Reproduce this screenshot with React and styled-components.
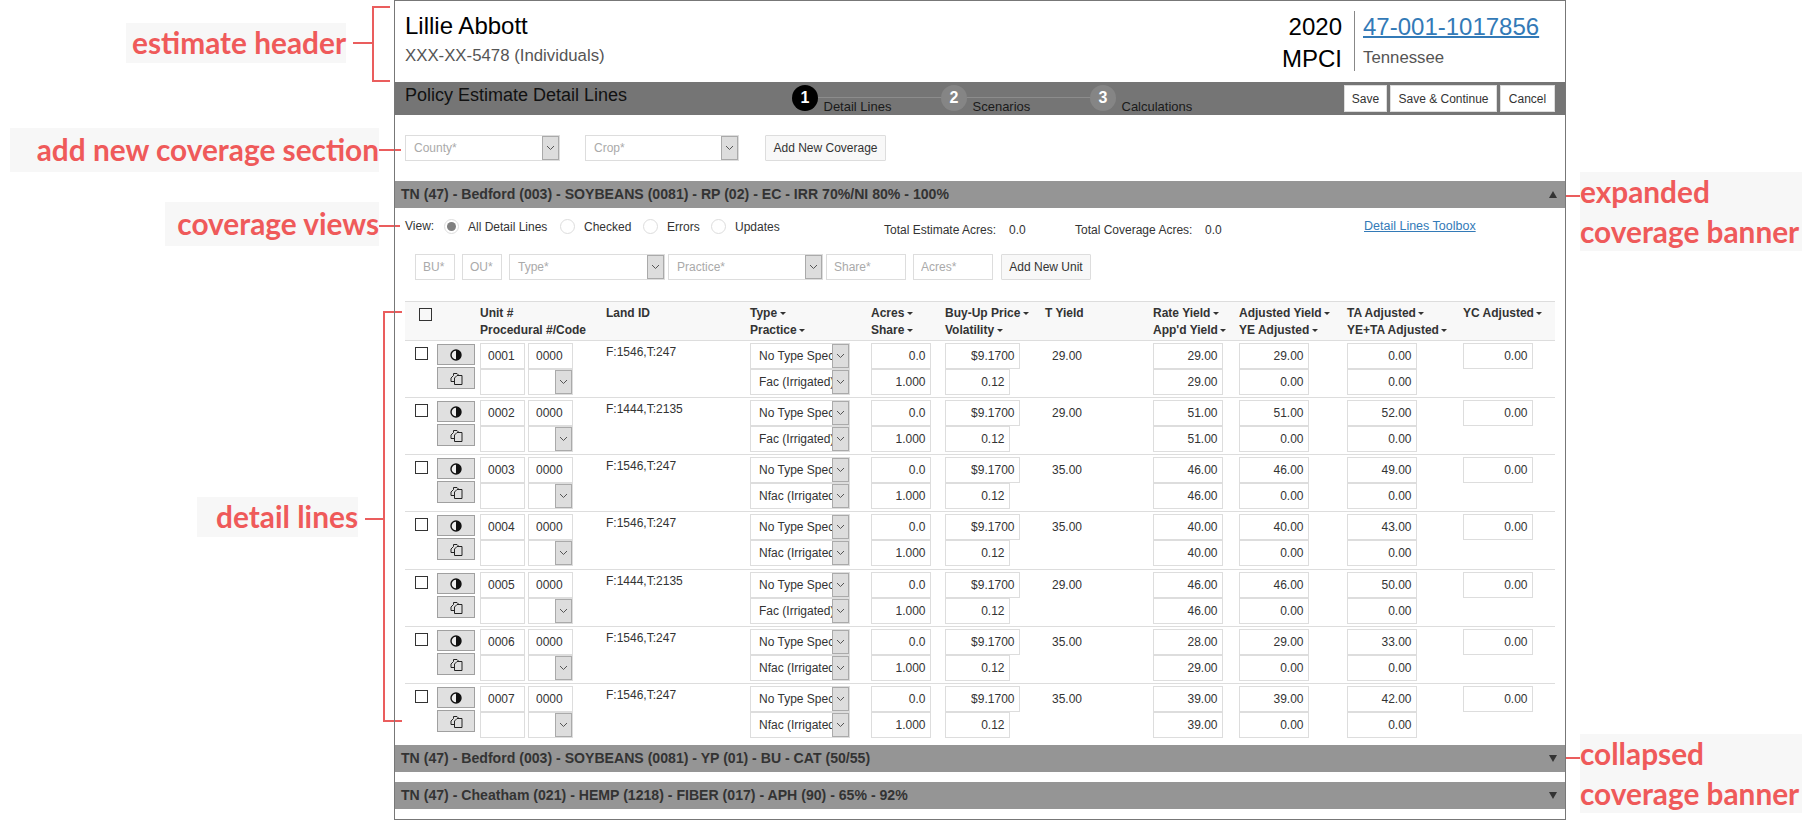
import React from 'react'
import styled, { createGlobalStyle } from 'styled-components'

const GlobalStyle = createGlobalStyle`
    html, body {
        margin: 0;
        padding: 0;
        background: #fff;
    }
    body {
        font-family: "Liberation Sans", Arial, sans-serif;
        font-size: 12px;
        color: #333;
    }
`

const Page = styled.div`
    position: relative;
    width: 1812px;
    height: 820px;
    overflow: hidden;
`

/* annotation layer around the screen */
const Note = styled.div`
    position: absolute;
    left: ${(p) => p.$x}px;
    top: ${(p) => p.$y}px;
    width: ${(p) => p.$w}px;
    height: ${(p) => p.$h}px;
    background: #f7f7f7;
    color: #ef5a5a;
    font-family: Lato, "Open Sans", sans-serif;
    font-weight: 700;
    font-size: 29.8px;
    line-height: 40px;
    text-align: ${(p) => p.$align || 'right'};
    white-space: nowrap;
    display: flex;
    flex-direction: column;
    justify-content: center;
`
const Bracket = styled.div`
    position: absolute;
    left: ${(p) => p.$x}px;
    top: ${(p) => p.$y}px;
    width: ${(p) => p.$w}px;
    height: ${(p) => p.$h}px;
    box-sizing: border-box;
    border: 2px solid #ea5d5d;
    border-right: none;
`
const Tick = styled.div`
    position: absolute;
    left: ${(p) => p.$x}px;
    top: ${(p) => p.$y}px;
    width: ${(p) => p.$w}px;
    height: 2px;
    background: #ea5d5d;
`

const Frame = styled.div`
    position: absolute;
    left: 394px;
    top: 0;
    width: 1172px;
    height: 820px;
    box-sizing: border-box;
    border: 1px solid #777;
`

const EstimateHeader = styled.header`
    height: 81px;
    display: flex;
    justify-content: space-between;
    padding-left: 10px;
`
const NameBlock = styled.div`
    padding-top: 11px;
`
const Name = styled.div`
    font-size: 24px;
    line-height: 28px;
    color: #000;
`
const Sub = styled.div`
    margin-top: 6px;
    font-size: 16.8px;
    line-height: 20px;
    color: #555;
`
const PolicyBlock = styled.div`
    display: flex;
    margin-top: 10px;
    height: 60px;
`
const YearCol = styled.div`
    padding-right: 12px;
    border-right: 1px solid #888;
    text-align: right;
    font-size: 24px;
    line-height: 31.5px;
    color: #000;
`
const PolicyCol = styled.div`
    width: 202px;
    padding-left: 8px;
`
const PolicyLink = styled.a`
    display: block;
    width: max-content;
    font-size: 24px;
    line-height: 31px;
    color: #337ab7;
    text-decoration: underline;
    text-decoration-thickness: 2px;
`
const StateName = styled.div`
    font-size: 16.8px;
    line-height: 32px;
    color: #555;
`

const StepBar = styled.div`
    position: relative;
    height: 33px;
    background: #757575;
    padding-left: 10px;
    display: flex;
    align-items: flex-start;
`
const BarTitle = styled.div`
    font-size: 18px;
    line-height: 27px;
    color: #111;
`
const Stepper = styled.div`
    position: absolute;
    left: 397px;
    top: 3px;
    display: flex;
    &::before {
        content: '';
        position: absolute;
        left: 13px;
        right: 136px;
        top: 12px;
        height: 1px;
        background: #8c8c8c;
    }
`
const Step = styled.div`
    position: relative;
    width: 149px;
    display: flex;
`
const StepDot = styled.div`
    width: 26px;
    height: 26px;
    border-radius: 50%;
    background: ${(p) => (p.$active ? '#000' : '#858585')};
    color: #fff;
    font-weight: 700;
    font-size: 16px;
    line-height: 26px;
    text-align: center;
`
const StepLabel = styled.div`
    margin: 14px 0 0 5.5px;
    font-size: 13px;
    line-height: 15px;
    color: #1a1a1a;
`
const BarButtons = styled.div`
    position: absolute;
    right: 10px;
    top: 3px;
    display: flex;
    gap: 3px;
`
const BarButton = styled.button`
    width: ${(p) => p.$w}px;
    height: 27px;
    padding: 0;
    border: 1px solid #ddd;
    background: #fff;
    color: #333;
    font: 12px "Liberation Sans", Arial, sans-serif;
`

const CoverageForm = styled.div`
    height: 46px;
    padding: 20px 0 0 10px;
    display: flex;
`
const SelectBox = styled.div`
    position: relative;
    width: ${(p) => p.$w}px;
    height: 26px;
    margin-right: ${(p) => p.$gap || 0}px;
    flex-shrink: 0;
    box-sizing: border-box;
    border: 1px solid #ddd;
    background: #fff;
    color: ${(p) => (p.$placeholder ? '#aaa' : '#333')};
    font-size: 12px;
    line-height: 24px;
    padding-left: 8px;
    overflow: hidden;
    white-space: nowrap;
`
const SelectArrow = styled.span`
    position: absolute;
    right: 0;
    top: 0;
    bottom: 0;
    width: 17px;
    box-sizing: border-box;
    background: #ddd;
    border: 1px solid #aaa;
    display: flex;
    align-items: center;
    justify-content: center;
`
const PlainButton = styled.button`
    width: ${(p) => p.$w}px;
    height: 26px;
    padding: 0;
    border: 1px solid #ddd;
    border-radius: 1px;
    background: #f8f8f8;
    color: #333;
    font: 12px "Liberation Sans", Arial, sans-serif;
`

const Banner = styled.div`
    height: 27px;
    margin-bottom: ${(p) => p.$gap || 0}px;
    padding: 0 8px 0 6px;
    background: #959595;
    color: #333;
    font-weight: 700;
    font-size: 14.1px;
    line-height: 27px;
    display: flex;
    justify-content: space-between;
    align-items: center;
`
const BannerTriangle = styled.span`
    width: 0;
    height: 0;
    border-left: 4px solid transparent;
    border-right: 4px solid transparent;
    ${(p) => (p.$up ? 'border-bottom: 7px solid #333;' : 'border-top: 7px solid #333;')}
`

const CoverageBody = styled.section`
    padding: 0 10px;
`
const ViewRow = styled.div`
    position: relative;
    height: 46px;
`
const ViewLabel = styled.span`
    position: absolute;
    left: ${(p) => p.$x}px;
    top: ${(p) => p.$y || 11}px;
    line-height: 14px;
    white-space: nowrap;
`
const Radio = styled.span`
    position: absolute;
    left: ${(p) => p.$x}px;
    top: 11px;
    width: 15px;
    height: 15px;
    box-sizing: border-box;
    border-radius: 50%;
    border: 1px solid #ddd;
    background: #fff;
    &::after {
        content: '';
        display: ${(p) => (p.$on ? 'block' : 'none')};
        width: 9px;
        height: 9px;
        margin: 2px;
        border-radius: 50%;
        background: #808080;
    }
`
const ToolboxLink = styled.a`
    position: absolute;
    left: 959px;
    top: 11px;
    font-size: 12.5px;
    line-height: 14px;
    color: #337ab7;
    text-decoration: underline;
`
const NewUnitRow = styled.div`
    height: 47px;
    display: flex;
    align-items: flex-start;
    padding-left: 10px;
`
const PlainInput = styled.input`
    width: ${(p) => p.$w}px;
    height: 26px;
    margin-right: ${(p) => p.$gap || 0}px;
    flex-shrink: 0;
    box-sizing: border-box;
    padding: 0 ${(p) => (p.$right ? '4.5px' : '7px')} 0 7px;
    border: 1px solid #ddd;
    border-radius: 0;
    outline: none;
    background: #fff;
    color: #333;
    font: 12px "Liberation Sans", Arial, sans-serif;
    text-align: ${(p) => (p.$right ? 'right' : 'left')};
    &::placeholder {
        color: #aaa;
        opacity: 1;
    }
`

const gridColumns = '32px 43px 126px 144px 121px 74px 100px 108px 86px 108px 116px 92px'

const TableHead = styled.div`
    display: grid;
    grid-template-columns: ${gridColumns};
    height: 35px;
    border-top: 1px solid #ddd;
    background: #f8f8f8;
    font-weight: 700;
    line-height: 17px;
    padding-top: 3px;
`
const HeadCell = styled.div`
    white-space: nowrap;
    grid-column: ${(p) => p.$col};
`
const Caret = styled.span`
    display: inline-block;
    width: 0;
    height: 0;
    margin-left: 2.5px;
    vertical-align: 2px;
    border-left: 3px solid transparent;
    border-right: 3px solid transparent;
    border-top: 3px solid #333;
`
const HeadCheck = styled.span`
    display: block;
    width: 13px;
    height: 13px;
    margin: 3px 0 0 14px;
    border: 1px solid #333;
    box-sizing: border-box;
`
const DetailRow = styled.div`
    display: grid;
    grid-template-columns: ${gridColumns};
    height: ${(p) => p.$h}px;
    box-sizing: border-box;
    border-top: 1px solid #ddd;
    padding-top: 2px;
`
const RowCheck = styled.span`
    display: block;
    width: 13px;
    height: 13px;
    margin: 4px 0 0 10px;
    border: 1px solid #333;
    box-sizing: border-box;
`
const ActionStack = styled.div`
    display: flex;
    flex-direction: column;
    gap: 2px;
    padding-top: 1px;
`
const ActionButton = styled.button`
    width: 38px;
    height: ${(p) => p.$h}px;
    padding: 0;
    box-sizing: border-box;
    border: 1px solid #a0a0a0;
    background: #e0e0e0;
    display: flex;
    align-items: center;
    justify-content: center;
`
const UnitGrid = styled.div`
    display: grid;
    grid-template-columns: 45px 45px;
    column-gap: 3px;
    grid-auto-rows: 26px;
`
const LandId = styled.div`
    padding-top: 2px;
    line-height: 14px;
`
const Stack = styled.div`
    display: flex;
    flex-direction: column;
    align-items: flex-start;
`
const TYield = styled.div`
    padding: 6px 0 0 7px;
    line-height: 14px;
`

const Chevron = () => (
    <svg width="9" height="6" viewBox="0 0 9 6" fill="none">
        <path d="M1 1l3.5 3.5L8 1" stroke="#555" strokeWidth="1" />
    </svg>
)

const AdjustIcon = () => (
    <svg width="12" height="12" viewBox="0 0 12 12">
        <circle cx="6" cy="6" r="5" fill="#eee" stroke="#111" strokeWidth="1.4" />
        <path d="M6 1a5 5 0 0 1 0 10z" fill="#111" />
    </svg>
)

const DuplicateIcon = () => (
    <svg width="13" height="13" viewBox="0 0 13 13" fill="none" stroke="#222" strokeWidth="1">
        <path d="M3.5 3.5V1.5H7l2 2" />
        <path d="M3.5 3.5L1 6v3.5h3" />
        <path d="M7 3.5h5v9H4.5V6z" />
    </svg>
)

const Select = ({ children, w, gap, placeholder }) => (
    <SelectBox $w={w} $gap={gap} $placeholder={placeholder}>
        {children}
        <SelectArrow>
            <Chevron />
        </SelectArrow>
    </SelectBox>
)

const Num = ({ w, value }) => <PlainInput $w={w} $right readOnly value={value} />

const rows = [
    { unit: '0001', land: 'F:1546,T:247', practice: 'Fac (Irrigated)', t: '29.00', rate: '29.00', app: '29.00', adj: '29.00', ta: '0.00', h: 57 },
    { unit: '0002', land: 'F:1444,T:2135', practice: 'Fac (Irrigated)', t: '29.00', rate: '51.00', app: '51.00', adj: '51.00', ta: '52.00', h: 57 },
    { unit: '0003', land: 'F:1546,T:247', practice: 'Nfac (Irrigated)', t: '35.00', rate: '46.00', app: '46.00', adj: '46.00', ta: '49.00', h: 57 },
    { unit: '0004', land: 'F:1546,T:247', practice: 'Nfac (Irrigated)', t: '35.00', rate: '40.00', app: '40.00', adj: '40.00', ta: '43.00', h: 58 },
    { unit: '0005', land: 'F:1444,T:2135', practice: 'Fac (Irrigated)', t: '29.00', rate: '46.00', app: '46.00', adj: '46.00', ta: '50.00', h: 57 },
    { unit: '0006', land: 'F:1546,T:247', practice: 'Nfac (Irrigated)', t: '35.00', rate: '28.00', app: '29.00', adj: '29.00', ta: '33.00', h: 57 },
    { unit: '0007', land: 'F:1546,T:247', practice: 'Nfac (Irrigated)', t: '35.00', rate: '39.00', app: '39.00', adj: '39.00', ta: '42.00', h: 62 },
]

function Row({ row }) {
    return (
        <DetailRow $h={row.h}>
            <RowCheck />
            <ActionStack>
                <ActionButton $h={21}><AdjustIcon /></ActionButton>
                <ActionButton $h={22}><DuplicateIcon /></ActionButton>
            </ActionStack>
            <UnitGrid>
                <PlainInput $w={45} readOnly value={row.unit} />
                <PlainInput $w={45} readOnly value="0000" />
                <PlainInput $w={45} readOnly value="" />
                <Select w={45} />
            </UnitGrid>
            <LandId>{row.land}</LandId>
            <Stack>
                <Select w={100}>No Type Specified</Select>
                <Select w={100}>{row.practice}</Select>
            </Stack>
            <Stack>
                <Num w={60} value="0.0" />
                <Num w={60} value="1.000" />
            </Stack>
            <Stack>
                <Num w={75} value="$9.1700" />
                <Num w={65} value="0.12" />
            </Stack>
            <TYield>{row.t}</TYield>
            <Stack>
                <Num w={70} value={row.rate} />
                <Num w={70} value={row.app} />
            </Stack>
            <Stack>
                <Num w={70} value={row.adj} />
                <Num w={70} value="0.00" />
            </Stack>
            <Stack>
                <Num w={70} value={row.ta} />
                <Num w={70} value="0.00" />
            </Stack>
            <Stack>
                <Num w={70} value="0.00" />
            </Stack>
        </DetailRow>
    )
}

export default function App() {
    return (
        <Page>
            <GlobalStyle />

            <Note $x={126} $y={23} $w={220} $h={40}>estimate header</Note>
            <Bracket $x={372} $y={6} $w={18} $h={76} />
            <Tick $x={353} $y={42} $w={19} />
            <Note $x={10} $y={128} $w={369} $h={44}>add new coverage section</Note>
            <Tick $x={379} $y={149} $w={22} />
            <Note $x={165} $y={202} $w={214} $h={44}>coverage views</Note>
            <Tick $x={379} $y={225} $w={21} />
            <Note $x={197} $y={497} $w={161} $h={40}>detail lines</Note>
            <Tick $x={365} $y={518} $w={19} />
            <Bracket $x={383} $y={311} $w={19} $h={411} />
            <Note $x={1580} $y={172} $w={222} $h={79} $align="left">
                <div>expanded</div>
                <div>coverage banner</div>
            </Note>
            <Tick $x={1561} $y={195} $w={19} />
            <Note $x={1580} $y={734} $w={222} $h={79} $align="left">
                <div>collapsed</div>
                <div>coverage banner</div>
            </Note>
            <Tick $x={1561} $y={757} $w={19} />

            <Frame>
                <EstimateHeader>
                    <NameBlock>
                        <Name>Lillie Abbott</Name>
                        <Sub>XXX-XX-5478 (Individuals)</Sub>
                    </NameBlock>
                    <PolicyBlock>
                        <YearCol>
                            <div>2020</div>
                            <div>MPCI</div>
                        </YearCol>
                        <PolicyCol>
                            <PolicyLink href="#">47-001-1017856</PolicyLink>
                            <StateName>Tennessee</StateName>
                        </PolicyCol>
                    </PolicyBlock>
                </EstimateHeader>

                <StepBar>
                    <BarTitle>Policy Estimate Detail Lines</BarTitle>
                    <Stepper>
                        <Step>
                            <StepDot $active>1</StepDot>
                            <StepLabel>Detail Lines</StepLabel>
                        </Step>
                        <Step>
                            <StepDot>2</StepDot>
                            <StepLabel>Scenarios</StepLabel>
                        </Step>
                        <Step>
                            <StepDot>3</StepDot>
                            <StepLabel>Calculations</StepLabel>
                        </Step>
                    </Stepper>
                    <BarButtons>
                        <BarButton $w={43}>Save</BarButton>
                        <BarButton $w={107}>Save &amp; Continue</BarButton>
                        <BarButton $w={55}>Cancel</BarButton>
                    </BarButtons>
                </StepBar>

                <CoverageForm>
                    <Select w={155} gap={25} placeholder>County*</Select>
                    <Select w={154} gap={26} placeholder>Crop*</Select>
                    <PlainButton $w={121}>Add New Coverage</PlainButton>
                </CoverageForm>

                <Banner>
                    TN (47) - Bedford (003) - SOYBEANS (0081) - RP (02) - EC - IRR 70%/NI 80% - 100%
                    <BannerTriangle $up />
                </Banner>

                <CoverageBody>
                    <ViewRow>
                        <ViewLabel $x={0}>View:</ViewLabel>
                        <Radio $x={39} $on />
                        <ViewLabel $x={63} $y={12}>All Detail Lines</ViewLabel>
                        <Radio $x={155} />
                        <ViewLabel $x={179} $y={12}>Checked</ViewLabel>
                        <Radio $x={238} />
                        <ViewLabel $x={262} $y={12}>Errors</ViewLabel>
                        <Radio $x={306} />
                        <ViewLabel $x={330} $y={12}>Updates</ViewLabel>
                        <ViewLabel $x={479} $y={15}>Total Estimate Acres:</ViewLabel>
                        <ViewLabel $x={604} $y={15}>0.0</ViewLabel>
                        <ViewLabel $x={670} $y={15}>Total Coverage Acres:</ViewLabel>
                        <ViewLabel $x={800} $y={15}>0.0</ViewLabel>
                        <ToolboxLink href="#">Detail Lines Toolbox</ToolboxLink>
                    </ViewRow>
                    <NewUnitRow>
                        <PlainInput $w={40} $gap={7} placeholder="BU*" readOnly />
                        <PlainInput $w={40} $gap={7} placeholder="OU*" readOnly />
                        <Select w={156} gap={3} placeholder>Type*</Select>
                        <Select w={155} gap={3} placeholder>Practice*</Select>
                        <PlainInput $w={80} $gap={7} placeholder="Share*" readOnly />
                        <PlainInput $w={80} $gap={8} placeholder="Acres*" readOnly />
                        <PlainButton $w={90}>Add New Unit</PlainButton>
                    </NewUnitRow>

                    <TableHead>
                        <div><HeadCheck /></div>
                        <HeadCell $col={3}>
                            <div>Unit #</div>
                            <div>Procedural #/Code</div>
                        </HeadCell>
                        <HeadCell $col={4}>Land ID</HeadCell>
                        <HeadCell $col={5}>
                            <div>Type<Caret /></div>
                            <div>Practice<Caret /></div>
                        </HeadCell>
                        <HeadCell $col={6}>
                            <div>Acres<Caret /></div>
                            <div>Share<Caret /></div>
                        </HeadCell>
                        <HeadCell $col={7}>
                            <div>Buy-Up Price<Caret /></div>
                            <div>Volatility<Caret /></div>
                        </HeadCell>
                        <HeadCell $col={8}>T Yield</HeadCell>
                        <HeadCell $col={9}>
                            <div>Rate Yield<Caret /></div>
                            <div>App'd Yield<Caret /></div>
                        </HeadCell>
                        <HeadCell $col={10}>
                            <div>Adjusted Yield<Caret /></div>
                            <div>YE Adjusted<Caret /></div>
                        </HeadCell>
                        <HeadCell $col={11}>
                            <div>TA Adjusted<Caret /></div>
                            <div>YE+TA Adjusted<Caret /></div>
                        </HeadCell>
                        <HeadCell $col={12}>YC Adjusted<Caret /></HeadCell>
                    </TableHead>

                    {rows.map((row) => (
                        <Row key={row.unit} row={row} />
                    ))}
                </CoverageBody>

                <Banner $gap={10}>
                    TN (47) - Bedford (003) - SOYBEANS (0081) - YP (01) - BU - CAT (50/55)
                    <BannerTriangle />
                </Banner>
                <Banner>
                    TN (47) - Cheatham (021) - HEMP (1218) - FIBER (017) - APH (90) - 65% - 92%
                    <BannerTriangle />
                </Banner>
            </Frame>
        </Page>
    )
}
